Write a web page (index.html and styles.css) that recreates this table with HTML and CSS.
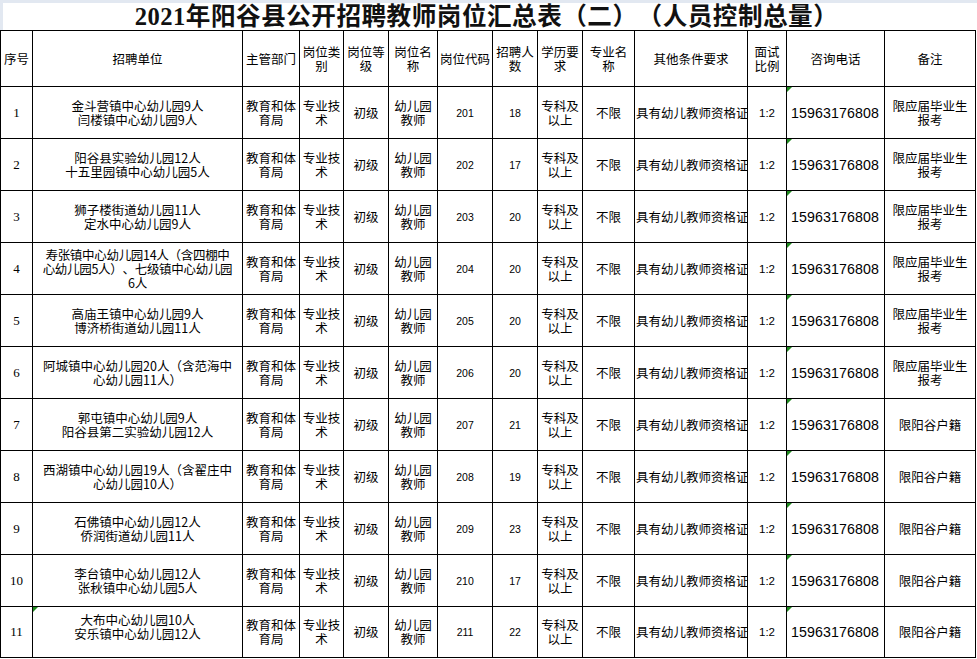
FILE: index.html
```html
<!DOCTYPE html>
<html lang="zh">
<head>
<meta charset="utf-8">
<title>2021年阳谷县公开招聘教师岗位汇总表（二）</title>
<link rel="stylesheet" href="styles.css">
</head>
<body>
<div class="sheet">
  <h1 class="title">2021年阳谷县公开招聘教师岗位汇总表（二）（人员控制总量）</h1>
  <table class="grid">
    <colgroup>
      <col style="width:32px"><col style="width:210px"><col style="width:57px"><col style="width:44px"><col style="width:45px"><col style="width:49px"><col style="width:55px"><col style="width:45px"><col style="width:45px"><col style="width:52px"><col style="width:113px"><col style="width:39px"><col style="width:98px"><col style="width:91px">
    </colgroup>
    <thead>
      <tr class="head">
        <th>序号</th><th>招聘单位</th><th>主管部门</th><th>岗位类<br>别</th><th>岗位等<br>级</th><th>岗位名<br>称</th><th>岗位代码</th><th>招聘人<br>数</th><th>学历要<br>求</th><th>专业名<br>称</th><th>其他条件要求</th><th>面试<br>比例</th><th>咨询电话</th><th>备注</th>
      </tr>
    </thead>
    <tbody>
      <tr><td class="no">1</td><td>金斗营镇中心幼儿园9人<br>闫楼镇中心幼儿园9人</td><td>教育和体<br>育局</td><td>专业技<br>术</td><td>初级</td><td>幼儿园<br>教师</td><td class="num">201</td><td class="num">18</td><td>专科及<br>以上</td><td>不限</td><td>具有幼儿教师资格证</td><td class="num ratio">1:2</td><td class="tel mark">15963176808</td><td>限应届毕业生<br>报考</td></tr>
      <tr><td class="no">2</td><td>阳谷县实验幼儿园12人<br>十五里园镇中心幼儿园5人</td><td>教育和体<br>育局</td><td>专业技<br>术</td><td>初级</td><td>幼儿园<br>教师</td><td class="num">202</td><td class="num">17</td><td>专科及<br>以上</td><td>不限</td><td>具有幼儿教师资格证</td><td class="num ratio">1:2</td><td class="tel mark">15963176808</td><td>限应届毕业生<br>报考</td></tr>
      <tr><td class="no">3</td><td>狮子楼街道幼儿园11人<br>定水中心幼儿园9人</td><td>教育和体<br>育局</td><td>专业技<br>术</td><td>初级</td><td>幼儿园<br>教师</td><td class="num">203</td><td class="num">20</td><td>专科及<br>以上</td><td>不限</td><td>具有幼儿教师资格证</td><td class="num ratio">1:2</td><td class="tel mark">15963176808</td><td>限应届毕业生<br>报考</td></tr>
      <tr><td class="no">4</td><td class="tight">寿张镇中心幼儿园14人（含四棚中<br>心幼儿园5人）、七级镇中心幼儿园<br>6人</td><td>教育和体<br>育局</td><td>专业技<br>术</td><td>初级</td><td>幼儿园<br>教师</td><td class="num">204</td><td class="num">20</td><td>专科及<br>以上</td><td>不限</td><td>具有幼儿教师资格证</td><td class="num ratio">1:2</td><td class="tel mark">15963176808</td><td>限应届毕业生<br>报考</td></tr>
      <tr><td class="no">5</td><td>高庙王镇中心幼儿园9人<br>博济桥街道幼儿园11人</td><td>教育和体<br>育局</td><td>专业技<br>术</td><td>初级</td><td>幼儿园<br>教师</td><td class="num">205</td><td class="num">20</td><td>专科及<br>以上</td><td>不限</td><td>具有幼儿教师资格证</td><td class="num ratio">1:2</td><td class="tel mark">15963176808</td><td>限应届毕业生<br>报考</td></tr>
      <tr><td class="no">6</td><td>阿城镇中心幼儿园20人（含范海中<br>心幼儿园11人）</td><td>教育和体<br>育局</td><td>专业技<br>术</td><td>初级</td><td>幼儿园<br>教师</td><td class="num">206</td><td class="num">20</td><td>专科及<br>以上</td><td>不限</td><td>具有幼儿教师资格证</td><td class="num ratio">1:2</td><td class="tel mark">15963176808</td><td>限应届毕业生<br>报考</td></tr>
      <tr><td class="no">7</td><td>郭屯镇中心幼儿园9人<br>阳谷县第二实验幼儿园12人</td><td>教育和体<br>育局</td><td>专业技<br>术</td><td>初级</td><td>幼儿园<br>教师</td><td class="num">207</td><td class="num">21</td><td>专科及<br>以上</td><td>不限</td><td>具有幼儿教师资格证</td><td class="num ratio">1:2</td><td class="tel mark">15963176808</td><td>限阳谷户籍</td></tr>
      <tr><td class="no">8</td><td>西湖镇中心幼儿园19人（含翟庄中<br>心幼儿园10人）</td><td>教育和体<br>育局</td><td>专业技<br>术</td><td>初级</td><td>幼儿园<br>教师</td><td class="num">208</td><td class="num">19</td><td>专科及<br>以上</td><td>不限</td><td>具有幼儿教师资格证</td><td class="num ratio">1:2</td><td class="tel mark">15963176808</td><td>限阳谷户籍</td></tr>
      <tr><td class="no">9</td><td>石佛镇中心幼儿园12人<br>侨润街道幼儿园11人</td><td>教育和体<br>育局</td><td>专业技<br>术</td><td>初级</td><td>幼儿园<br>教师</td><td class="num">209</td><td class="num">23</td><td>专科及<br>以上</td><td>不限</td><td>具有幼儿教师资格证</td><td class="num ratio">1:2</td><td class="tel mark">15963176808</td><td>限阳谷户籍</td></tr>
      <tr><td class="no">10</td><td>李台镇中心幼儿园12人<br>张秋镇中心幼儿园5人</td><td>教育和体<br>育局</td><td>专业技<br>术</td><td>初级</td><td>幼儿园<br>教师</td><td class="num">210</td><td class="num">17</td><td>专科及<br>以上</td><td>不限</td><td>具有幼儿教师资格证</td><td class="num ratio">1:2</td><td class="tel mark">15963176808</td><td>限阳谷户籍</td></tr>
      <tr class="last"><td class="no">11</td><td class="mark raised">大布中心幼儿园10人<br>安乐镇中心幼儿园12人</td><td>教育和体<br>育局</td><td>专业技<br>术</td><td>初级</td><td>幼儿园<br>教师</td><td class="num">211</td><td class="num">22</td><td>专科及<br>以上</td><td>不限</td><td>具有幼儿教师资格证</td><td class="num ratio">1:2</td><td class="tel mark">15963176808</td><td>限阳谷户籍</td></tr>
    </tbody>
  </table>
</div>
</body>
</html>
```

FILE: styles.css
```css
html, body {
  margin: 0;
  padding: 0;
  background: #ffffff;
  text-spacing-trim: space-all;
}

.sheet {
  width: 977px;
  height: 659px;
  overflow: hidden;
  background: #ffffff;
  border-top: 3px solid #e2e8f1;
  box-sizing: border-box;
  text-spacing-trim: space-all;
}

.title {
  margin: 0 1px 0 3px;
  height: 27px;
  line-height: 27px;
  padding-right: 6px;
  text-align: center;
  font-family: "Liberation Serif", "Noto Sans CJK SC", serif;
  font-weight: 700;
  font-size: 24.6px;
  color: #111;
  letter-spacing: 0.5px;
  white-space: nowrap;
  background: #fff;
  box-shadow: -3px 0 0 #e2e8f1;
  text-spacing-trim: space-all;
}

.grid {
  border-collapse: collapse;
  table-layout: fixed;
  width: 976px;
  font-family: "Noto Sans CJK SC", "Noto Sans", sans-serif;
  font-size: 12.5px;
  line-height: 14px;
  color: #000;
  text-spacing-trim: space-all;
}

.grid th,
.grid td {
  border: 1px solid #000;
  padding: 0 1px;
  text-align: center;
  vertical-align: middle;
  font-weight: 400;
  white-space: nowrap;
  overflow: hidden;
  position: relative;
}

.grid .head {
  height: 56px;
}

.grid tbody tr {
  height: 52px;
}

.grid tbody tr.last {
  height: 51px;
}

.grid .no {
  font-family: "Liberation Serif", serif;
  font-size: 13px;
}

.grid .num {
  font-family: "Liberation Sans", Arial, sans-serif;
  font-size: 10.5px;
}

.grid .ratio {
  font-size: 11.5px;
}

.grid .tel {
  text-align: left;
  padding-left: 4px;
  font-family: "Liberation Sans", Arial, sans-serif;
  font-size: 14.2px;
  letter-spacing: 0.1px;
}

.grid .tight {
  letter-spacing: -0.3px;
}

.grid .raised {
  padding-bottom: 10px;
}

.grid .mark::before {
  content: "";
  position: absolute;
  left: 0;
  top: 0;
  width: 0;
  height: 0;
  border-top: 5px solid #1f8a1f;
  border-right: 5px solid transparent;
}
```
